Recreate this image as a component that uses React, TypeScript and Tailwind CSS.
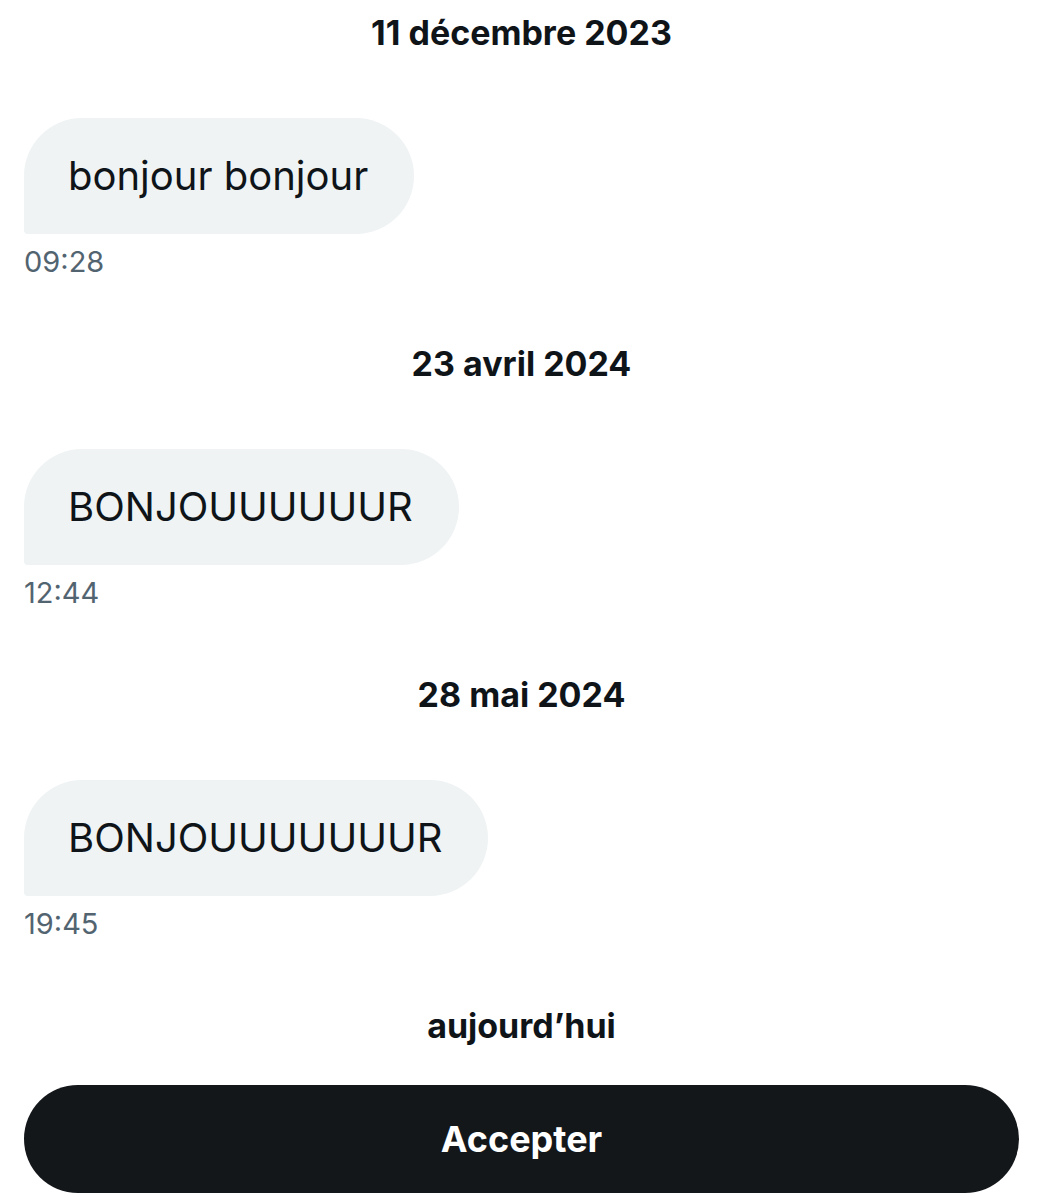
const messages = [
  { date: '11 décembre 2023', text: 'bonjour bonjour', time: '09:28' },
  { date: '23 avril 2024', text: 'BONJOUUUUUUR', time: '12:44' },
  { date: '28 mai 2024', text: 'BONJOUUUUUUUR', time: '19:45' },
];

const font = { fontFamily: 'Inter, "Noto Sans", sans-serif' };

export default function App() {
  return (
    <div className="w-[1043px] h-[1200px] bg-white overflow-hidden flex flex-col px-6" style={font}>
      {messages.map((m) => (
        <div key={m.time} className="flex flex-col">
          <div className="mt-[13px] h-10 flex items-center justify-center text-[34px] font-bold text-[#0f1419] leading-none">
            {m.date}
          </div>
          <div className="mt-[65px] self-start h-[116px] flex items-center pl-[44px] pr-[46px] bg-[#eff3f4] rounded-[58px] rounded-bl-[4px] text-[40px] text-[#0f1419] leading-none">
            {m.text}
          </div>
          <div className="mt-[10px] h-[34px] flex items-center text-[29px] text-[#536471] leading-none">
            {m.time}
          </div>
          <div className="h-[53px]" />
        </div>
      ))}
      <div className="mt-[13px] h-10 flex items-center justify-center text-[34px] font-bold text-[#0f1419] leading-none">
        aujourd’hui
      </div>
      <button className="mt-[39px] h-[108px] w-full rounded-full bg-[#14171a] text-white text-[36px] font-bold flex items-center justify-center">
        Accepter
      </button>
    </div>
  );
}
